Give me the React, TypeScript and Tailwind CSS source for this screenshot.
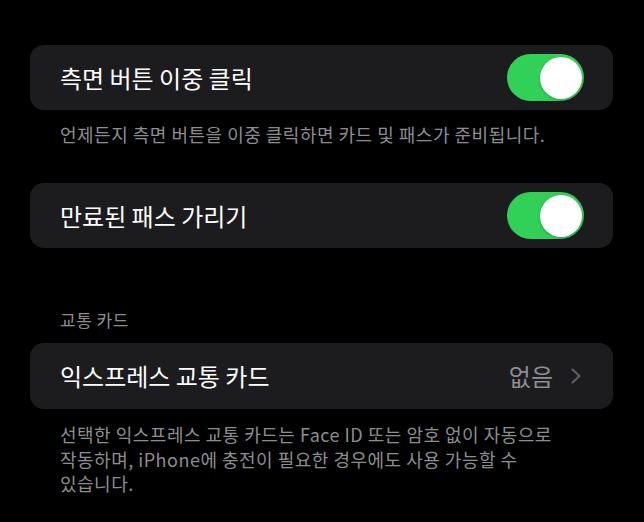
import React from "react";

const font = { fontFamily: '"Noto Sans CJK KR", "Noto Sans", sans-serif' };

function Toggle() {
  return (
    <div className="w-[77px] h-[47px] rounded-full bg-[#31d158] flex items-center justify-end pr-[2px]">
      <div className="w-[42px] h-[42px] rounded-full bg-white shadow-[0_1px_3px_rgba(0,0,0,0.25)]" />
    </div>
  );
}

function Card({ children }: { children: React.ReactNode }) {
  return (
    <div className="h-[65px] rounded-[14px] bg-[#1c1c1e] flex items-center justify-between pl-[30px] pr-[29px]">
      {children}
    </div>
  );
}

export default function App() {
  return (
    <div
      className="w-[644px] h-[522px] bg-black overflow-hidden pt-[45px] pl-[30px] pr-[31px] flex flex-col"
      style={font}
    >
      <Card>
        <span className="text-[24px] font-normal text-white leading-none">측면 버튼 이중 클릭</span>
        <Toggle />
      </Card>
      <p className="mt-[12px] px-[30px] text-[18px] leading-[24px] tracking-[0.5px] text-[#8d8d92] whitespace-nowrap">
        언제든지 측면 버튼을 이중 클릭하면 카드 및 패스가 준비됩니다.
      </p>
      <div className="mt-[37px]">
        <Card>
          <span className="text-[24px] font-normal text-white leading-none">만료된 패스 가리기</span>
          <Toggle />
        </Card>
      </div>
      <p className="mt-[62px] px-[30px] text-[17px] leading-[20px] tracking-[0.5px] text-[#8d8d92]">교통 카드</p>
      <div className="mt-[13px] h-[66px] rounded-[14px] bg-[#1c1c1e] flex items-center justify-between pl-[30px] pr-[31px]">
        <span className="text-[24px] font-normal text-white leading-none">익스프레스 교통 카드</span>
        <div className="flex items-center gap-[17px]">
          <span className="text-[24px] text-[#8d8d92] leading-none">없음</span>
          <svg width="12" height="16" viewBox="0 0 12 16" fill="none">
            <path d="M2.5 1.5 L9.5 8 L2.5 14.5" stroke="#5d5d62" strokeWidth="2.2" strokeLinecap="round" strokeLinejoin="round" />
          </svg>
        </div>
      </div>
      <div className="mt-[13px] px-[30px] text-[18px] leading-[24.5px] tracking-[0.5px] text-[#8d8d92] whitespace-nowrap">
        <div>선택한 익스프레스 교통 카드는 Face ID 또는 암호 없이 자동으로</div>
        <div>작동하며, iPhone에 충전이 필요한 경우에도 사용 가능할 수</div>
        <div>있습니다.</div>
      </div>
    </div>
  );
}
